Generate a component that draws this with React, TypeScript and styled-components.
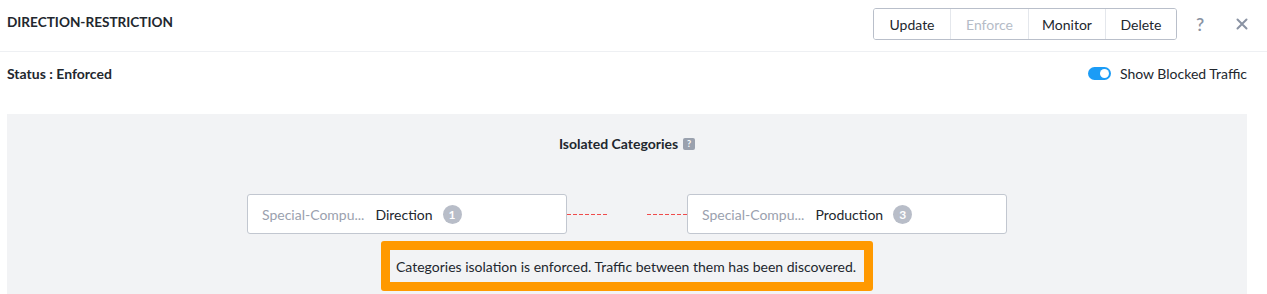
import styled, { createGlobalStyle } from 'styled-components'

const GlobalStyle = createGlobalStyle`
  body {
    margin: 0;
    background: #ffffff;
    font-family: Lato, "Open Sans", sans-serif;
    color: #22272e;
  }
`

const Header = styled.div`
  height: 52px;
  box-sizing: border-box;
  border-bottom: 1px solid #eef0f3;
  display: flex;
  align-items: flex-start;
  padding: 0 15px 0 7px;
`

const Title = styled.div`
  font-size: 13.6px;
  font-weight: 700;
  margin-top: 14px;
  flex: 1;
`

const ButtonGroup = styled.div`
  display: flex;
  margin-top: 8px;
  height: 32px;
  border: 1px solid #b9bfca;
  border-radius: 3px;
  box-sizing: border-box;
  overflow: hidden;
`

const GroupButton = styled.button<{ $disabled?: boolean; $width: number }>`
  font-family: inherit;
  font-size: 14px;
  background: #fff;
  border: none;
  border-left: 1px solid #e4e7ec;
  padding: 0;
  width: ${p => p.$width}px;
  color: ${p => (p.$disabled ? '#b5bcc7' : '#22272e')};
  &:first-child {
    border-left: none;
  }
`

const IconButton = styled.div<{ $gap: number }>`
  width: 20px;
  height: 20px;
  margin-top: 14px;
  margin-left: ${p => p.$gap}px;
  display: flex;
  align-items: center;
  justify-content: center;
  color: #8a93a3;
  font-size: 18px;
  font-weight: 600;
`

const StatusRow = styled.div`
  height: 62px;
  box-sizing: border-box;
  display: flex;
  align-items: flex-start;
  justify-content: space-between;
  padding: 13px 20px 0 7px;
  font-size: 14px;
`

const StatusText = styled.div`
  font-weight: 700;
`

const ToggleWrap = styled.div`
  display: flex;
  align-items: center;
  gap: 9px;
`

const Toggle = styled.div`
  width: 23px;
  height: 13px;
  border-radius: 7px;
  background: #1b9cf6;
  position: relative;
  &::after {
    content: '';
    position: absolute;
    right: 2px;
    top: 2px;
    width: 9px;
    height: 9px;
    border-radius: 50%;
    background: #fff;
  }
`

const Panel = styled.div`
  margin: 0 20px 0 7px;
  background: #f2f3f5;
  height: 180px;
  display: flex;
  flex-direction: column;
  align-items: center;
`

const PanelTitle = styled.div`
  margin-top: 21px;
  font-size: 14px;
  font-weight: 700;
  display: flex;
  align-items: center;
  gap: 5px;
`

const HelpBadge = styled.span`
  width: 12px;
  height: 12px;
  border-radius: 2px;
  background: #9aa1ae;
  color: #fff;
  font-size: 9px;
  font-weight: 700;
  display: inline-flex;
  align-items: center;
  justify-content: center;
`

const CategoryRow = styled.div`
  margin-top: 42px;
  display: flex;
  align-items: center;
`

const CategoryBox = styled.div`
  width: 320px;
  height: 40px;
  box-sizing: border-box;
  background: #fff;
  border: 1px solid #c2c7d0;
  border-radius: 3px;
  display: flex;
  align-items: center;
  padding-left: 14px;
  font-size: 14px;
`

const CategoryKey = styled.span`
  color: #9aa1ae;
  margin-right: 11px;
`

const CategoryValue = styled.span`
  color: #22272e;
  margin-right: 10px;
`

const CountBadge = styled.span`
  width: 19px;
  height: 19px;
  border-radius: 50%;
  background: #b8bdc8;
  color: #fff;
  font-size: 12px;
  font-weight: 700;
  display: inline-flex;
  align-items: center;
  justify-content: center;
`

const Connector = styled.div`
  width: 120px;
  display: flex;
  justify-content: space-between;
`

const Dash = styled.div`
  width: 40px;
  height: 1px;
  background: repeating-linear-gradient(to right, #ef4b4b 0 4px, transparent 4px 6px);
`

const Notice = styled.div`
  margin-top: 7px;
  border: 9px solid #ff9900;
  border-radius: 3px;
  padding: 0 0 0 6px;
  width: 492px;
  height: 50px;
  box-sizing: border-box;
  display: flex;
  align-items: center;
  font-size: 14px;
`

const categories = [
  { key: 'Special-Compu...', value: 'Direction', count: 1 },
  { key: 'Special-Compu...', value: 'Production', count: 3 },
]

const CategoryCard = ({ c }: { c: typeof categories[number] }) => (
  <CategoryBox>
    <CategoryKey>{c.key}</CategoryKey>
    <CategoryValue>{c.value}</CategoryValue>
    <CountBadge>{c.count}</CountBadge>
  </CategoryBox>
)

export default function App() {
  return (
    <>
      <GlobalStyle />
      <Header>
        <Title>DIRECTION-RESTRICTION</Title>
        <ButtonGroup>
          <GroupButton $width={76}>Update</GroupButton>
          <GroupButton $width={78} $disabled>Enforce</GroupButton>
          <GroupButton $width={77}>Monitor</GroupButton>
          <GroupButton $width={71}>Delete</GroupButton>
        </ButtonGroup>
        <IconButton $gap={13}>?</IconButton>
        <IconButton $gap={22}>
          <svg width="12" height="12" viewBox="0 0 12 12">
            <path d="M1.5 1.5 L10.5 10.5 M10.5 1.5 L1.5 10.5" stroke="#8a93a3" strokeWidth="2" strokeLinecap="round" />
          </svg>
        </IconButton>
      </Header>
      <StatusRow>
        <StatusText>Status : Enforced</StatusText>
        <ToggleWrap>
          <Toggle />
          <span>Show Blocked Traffic</span>
        </ToggleWrap>
      </StatusRow>
      <Panel>
        <PanelTitle>
          Isolated Categories <HelpBadge>?</HelpBadge>
        </PanelTitle>
        <CategoryRow>
          <CategoryCard c={categories[0]} />
          <Connector>
            <Dash />
            <Dash />
          </Connector>
          <CategoryCard c={categories[1]} />
        </CategoryRow>
        <Notice>Categories isolation is enforced. Traffic between them has been discovered.</Notice>
      </Panel>
    </>
  )
}
